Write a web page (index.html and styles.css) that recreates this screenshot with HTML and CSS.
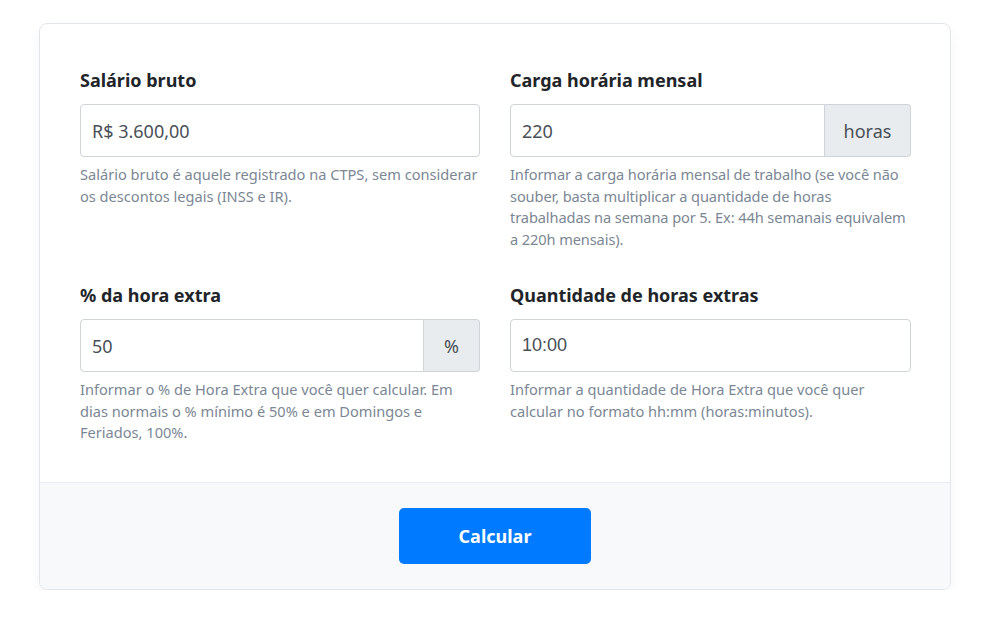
FILE: index.html
```html
<!DOCTYPE html>
<html lang="pt-BR">
<head>
    <meta charset="UTF-8">
    <meta name="viewport" content="width=device-width, initial-scale=1.0">
    <title>Calculadora de Hora Extra</title>
    <link rel="stylesheet" href="styles.css">
</head>
<body>

<div class="page">
    <form class="card" onsubmit="return false">
        <div class="card-body">
            <div class="row">
                <div class="form-group">
                    <label for="salario">Salário bruto</label>
                    <input type="text" id="salario" class="form-control" value="R$ 3.600,00">
                    <small class="help">Salário bruto é aquele registrado na CTPS, sem considerar os descontos legais (INSS e IR).</small>
                </div>
                <div class="form-group">
                    <label for="carga">Carga horária mensal</label>
                    <div class="input-group">
                        <input type="text" id="carga" class="form-control" value="220">
                        <span class="addon addon-wide">horas</span>
                    </div>
                    <small class="help help-tight">Informar a carga horária mensal de trabalho (se você não souber, basta multiplicar a quantidade de horas trabalhadas na semana por 5. Ex: 44h semanais equivalem a 220h mensais).</small>
                </div>
            </div>
            <div class="row">
                <div class="form-group">
                    <label for="percent">% da hora extra</label>
                    <div class="input-group">
                        <input type="text" id="percent" class="form-control" value="50">
                        <span class="addon">%</span>
                    </div>
                    <small class="help">Informar o % de Hora Extra que você quer calcular. Em dias normais o % mínimo é 50% e em Domingos e Feriados, 100%.</small>
                </div>
                <div class="form-group">
                    <label for="horas">Quantidade de horas extras</label>
                    <input type="text" id="horas" class="form-control time" value="10:00">
                    <small class="help">Informar a quantidade de Hora Extra que você quer calcular no formato hh:mm (horas:minutos).</small>
                </div>
            </div>
        </div>
        <div class="card-footer">
            <button type="submit" class="btn">Calcular</button>
        </div>
    </form>
</div>

</body>
</html>
```

FILE: styles.css
```css
:root {
    --blue: #007bff;
    --text: #212529;
    --input: #495057;
    --muted: #7b8794;
    --border: #ced4da;
}
body {
    font-family: "Segoe UI", "Noto Sans", Roboto, Arial, sans-serif;
    background: #fff;
    color: var(--text);
    margin: 0;
}
.page { padding: 23px 0 0 39px; }

.card {
    width: 910px;
    border: 1px solid #e1e6ec;
    border-radius: 8px;
    box-shadow: 0 6px 14px rgba(0,0,0,0.04);
    overflow: hidden;
    background: #fff;
}
.card-body { padding: 43px 40px 38px; display: flex; flex-direction: column; gap: 32px; }
.row { display: grid; grid-template-columns: 400px 401px; gap: 30px; }

.form-group { display: flex; flex-direction: column; }
label { font-size: 18px; font-weight: 700; line-height: 27px; margin-bottom: 10px; }

.form-control {
    box-sizing: border-box;
    height: 53px;
    width: 100%;
    padding: 0 11px;
    font-family: inherit;
    font-size: 18px;
    color: var(--input);
    border: 1px solid var(--border);
    border-radius: 4px;
    background: #fff;
}
.form-control.time { font-family: "Liberation Sans", Arial, sans-serif; font-size: 18px; }

.input-group { display: flex; }
.input-group .form-control { flex: 1; border-radius: 4px 0 0 4px; }
.addon {
    display: flex; align-items: center; justify-content: center;
    width: 56px;
    box-sizing: border-box;
    height: 53px;
    font-size: 18px;
    color: var(--input);
    background: #e9ecef;
    border: 1px solid var(--border);
    border-left: none;
    border-radius: 0 4px 4px 0;
}
.addon-wide { width: 86px; }

.help { font-size: 14.6px; line-height: 21.5px; color: var(--muted); margin-top: 7px; }
.help-tight { letter-spacing: -0.1px; }

.card-footer {
    background: #f8f9fa;
    border-top: 1px solid #e9edf1;
    padding: 25px 0 25px;
    display: flex;
    justify-content: center;
}
.btn {
    width: 192px;
    height: 56px;
    border: none;
    border-radius: 5px;
    background: var(--blue);
    color: #fff;
    font-family: inherit;
    font-size: 18px;
    font-weight: 700;
    cursor: pointer;
}
```
